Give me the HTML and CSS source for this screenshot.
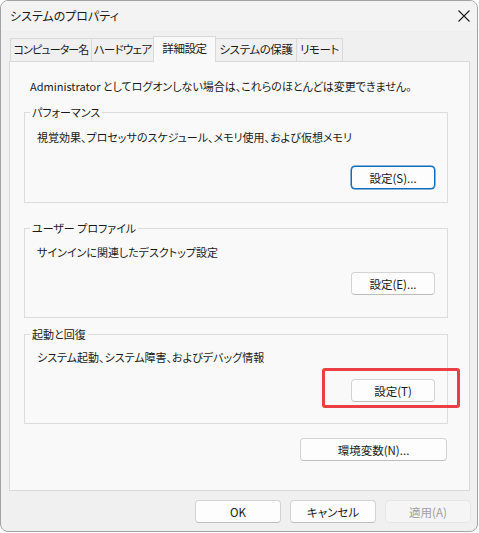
FILE: index.html
```html
<!DOCTYPE html>
<html lang="ja">
<head>
    <meta charset="UTF-8">
    <meta name="viewport" content="width=device-width, initial-scale=1.0">
    <title>システムのプロパティ</title>
    <link rel="stylesheet" href="styles.css">
</head>
<body>
<div class="window">
    <div class="titlebar">
        <span class="title">システムのプロパティ</span>
        <svg class="close" width="12" height="12" viewBox="0 0 12 12">
            <path d="M0.5 0.5 L11.5 11.5 M11.5 0.5 L0.5 11.5" stroke="#1b1b1b" stroke-width="1.1" fill="none"/>
        </svg>
    </div>

    <div class="tabs">
        <div class="tab tab-name">コンピューター名</div>
        <div class="tab tab-hw">ハードウェア</div>
        <div class="tab tab-adv active">詳細設定</div>
        <div class="tab tab-prot">システムの保護</div>
        <div class="tab tab-remote">リモート</div>
    </div>

    <div class="panel">
        <p class="note">Administrator としてログオンしない場合は、これらのほとんどは変更できません。</p>

        <fieldset class="group group-perf">
            <legend>パフォーマンス</legend>
            <p class="desc">視覚効果、プロセッサのスケジュール、メモリ使用、および仮想メモリ</p>
            <div class="group-actions">
                <button class="btn btn-small btn-focus">設定(S)...</button>
            </div>
        </fieldset>

        <fieldset class="group group-profile">
            <legend>ユーザー プロファイル</legend>
            <p class="desc">サインインに関連したデスクトップ設定</p>
            <div class="group-actions">
                <button class="btn btn-small">設定(E)...</button>
            </div>
        </fieldset>

        <fieldset class="group group-startup">
            <legend>起動と回復</legend>
            <p class="desc">システム起動、システム障害、およびデバッグ情報</p>
            <div class="group-actions">
                <span class="marked">
                    <button class="btn btn-small">設定(T)</button>
                    <span class="highlight"></span>
                </span>
            </div>
        </fieldset>

        <div class="env-row">
            <button class="btn btn-env">環境変数(N)...</button>
        </div>
    </div>

    <div class="footer">
        <button class="btn btn-footer">OK</button>
        <button class="btn btn-footer">キャンセル</button>
        <button class="btn btn-footer" disabled>適用(A)</button>
    </div>
</div>
</body>
</html>
```

FILE: styles.css
```css
body{
    margin: 0;
    background-color: #ffffff;
    font-family: "Noto Sans CJK JP", "Noto Sans", sans-serif;
    font-feature-settings: "palt";
    font-size: 11px;
    color: #1a1a1a;
}
.window{
    width: 478px;
    height: 532px;
    box-sizing: border-box;
    border: 1px solid #a3a3a3;
    border-radius: 8px;
    background-color: #f0f0f0;
    overflow: hidden;
}
.titlebar{
    height: 30px;
    background-color: #f3f3f3;
    display: flex;
    align-items: center;
    justify-content: space-between;
    padding: 0 8px 0 9px;
}
.title{
    font-size: 12px;
    line-height: 16px;
}
.close{
    display: block;
    margin-right: -1px;
}

/* tabs */
.tabs{
    display: flex;
    align-items: flex-end;
    height: 24px;
    margin-top: 6px;
    padding-left: 9px;
}
.tab{
    height: 23px;
    box-sizing: border-box;
    border: 1px solid #d9d9d9;
    border-bottom: none;
    margin-right: -1px;
    line-height: 21px;
    text-align: center;
    white-space: nowrap;
    font-size: 11.5px;
    letter-spacing: -0.4px;
    background-color: #f0f0f0;
}
.tab-name{ width: 82px; font-size: 11px; letter-spacing: -0.9px; }
.tab-hw{ width: 63px; letter-spacing: -0.7px; }
.tab-adv{ width: 63px; }
.tab-prot{ width: 82px; }
.tab-remote{ width: 47px; }
.tab.active{
    height: 26px;
    margin-bottom: -1px;
    background-color: #f9f9f9;
    position: relative;
    z-index: 1;
    line-height: 23px;
}

/* panel */
.panel{
    width: 461px;
    height: 430px;
    box-sizing: border-box;
    margin-left: 8px;
    border: 1px solid #d9d9d9;
    background-color: #f9f9f9;
    padding: 16px 0 0 20px;
}
.note{
    margin: 0;
    line-height: 16px;
}
.group{
    width: 424px;
    box-sizing: border-box;
    margin: 10px 0 0 -6px;
    padding: 0 12px;
    border: 1px solid #dcdcdc;
    min-inline-size: 0;
}
.group legend{
    padding: 0 2px;
    margin-left: -7px;
    line-height: 16px;
}
.desc{
    margin: 9px 0 0 0;
    line-height: 16px;
}
.group-actions{
    display: flex;
    justify-content: flex-end;
}
.group-perf .group-actions{
    margin: 21px 0 13px 0;
}
.group-profile{
    margin-top: 17px;
}
.group-profile .desc{
    margin-top: 8px;
}
.group-profile .group-actions{
    margin: 12px 0 22px 0;
}
.group-startup{
    margin-top: 8px;
}
.group-startup .desc{
    margin-top: 7px;
}
.group-startup .group-actions{
    margin: 14px 0 21px 0;
}
.marked{
    position: relative;
    display: block;
}
.highlight{
    position: absolute;
    left: -29px;
    top: -11px;
    width: 138px;
    height: 40px;
    box-sizing: border-box;
    border: 3px solid #ec3f45;
    border-radius: 3px;
}
.env-row{
    width: 424px;
    margin: 14px 0 0 -6px;
    display: flex;
    justify-content: flex-end;
}

/* buttons */
.btn{
    font-family: inherit;
    font-feature-settings: "palt";
    font-size: 11.5px;
    color: #1a1a1a;
    background-color: #fdfdfd;
    border: 1px solid #d3d3d3;
    border-bottom-color: #bdbdbd;
    border-radius: 4px;
    height: 23px;
    padding: 0;
    line-height: 20px;
    display: block;
}
.btn-small{
    width: 84px;
}
.btn-focus{
    border: 1px solid #0f6cbd;
    box-shadow: 0 0 0 0.5px #0f6cbd;
}
.btn-env{
    width: 147px;
    margin-right: 1px;
}
.footer{
    display: flex;
    justify-content: flex-end;
    gap: 9px;
    margin-top: 9px;
    padding-right: 6px;
}
.btn-footer{
    width: 86px;
}
.btn-footer:disabled{
    color: #a0a0a0;
    background-color: #f5f5f5;
    border-color: #e6e6e6;
}
```
